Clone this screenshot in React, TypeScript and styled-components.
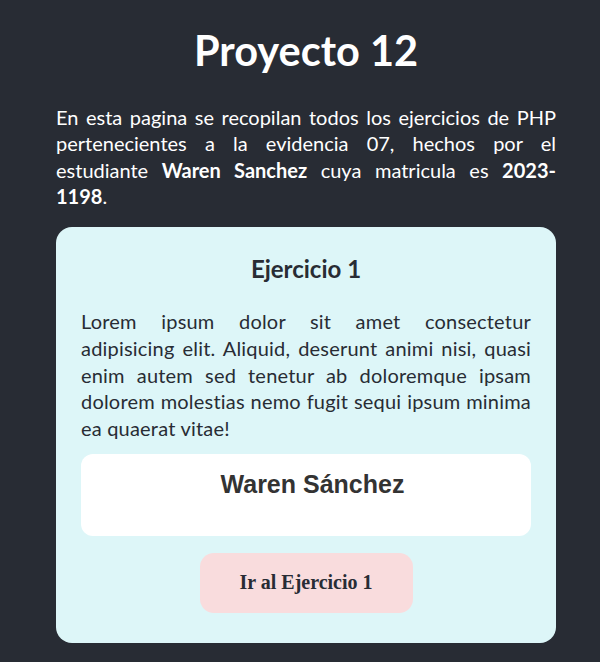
import React from "react";
import styled, { createGlobalStyle } from "styled-components";

const Global = createGlobalStyle`
  html, body { margin: 0; padding: 0; background: #282c34; }
  body { font-family: Lato, "Open Sans", sans-serif; }
`;

const Page = styled.main`
  width: 500px;
  margin-left: 56px;
  padding: 26px 0 19px;
  color: #ffffff;
`;

const Title = styled.h1`
  margin: 0;
  text-align: center;
  font-size: 41.5px;
  line-height: 48px;
  font-weight: bold;
`;

const Intro = styled.p`
  margin: 30px 0 0;
  font-size: 20px;
  line-height: 26.3px;
  text-align: justify;
`;

const Card = styled.section`
  margin-top: 18px;
  background: #ddf6f8;
  border-radius: 16px;
  padding: 28px 25px 30px;
  color: #282c34;
  display: flex;
  flex-direction: column;
`;

const CardTitle = styled.h3`
  margin: 0;
  text-align: center;
  font-size: 24px;
  line-height: 28px;
  font-weight: bold;
`;

const CardText = styled.p`
  margin: 25px 0 0;
  font-size: 20px;
  line-height: 26.7px;
  letter-spacing: 0.2px;
  text-align: justify;
`;

const NameBox = styled.div`
  margin-top: 12px;
  background: #ffffff;
  border-radius: 12px;
  height: 82px;
  padding: 16px 0 0 13px;
  box-sizing: border-box;
`;

const Name = styled.h2`
  margin: 0;
  text-align: center;
  font-family: "Liberation Sans", Arial, sans-serif;
  font-size: 25px;
  line-height: 29px;
  font-weight: bold;
  color: #333333;
`;

const Button = styled.button`
  align-self: center;
  margin-top: 17px;
  width: 213px;
  height: 60px;
  border: none;
  border-radius: 14px;
  background: #f9dcdd;
  color: #282c34;
  font-family: "Liberation Serif", "Times New Roman", serif;
  font-size: 20px;
  font-weight: bold;
  cursor: pointer;
`;

export default function App() {
  return (
    <>
      <Global />
      <Page>
        <Title>Proyecto 12</Title>
        <Intro>
          En esta pagina se recopilan todos los ejercicios de PHP pertenecientes a la evidencia 07, hechos por el
          estudiante <b>Waren Sanchez</b> cuya matricula es <b>2023-1198</b>.
        </Intro>
        <Card>
          <CardTitle>Ejercicio 1</CardTitle>
          <CardText>
            Lorem ipsum dolor sit amet consectetur adipisicing elit. Aliquid, deserunt animi nisi, quasi enim autem sed
            tenetur ab doloremque ipsam dolorem molestias nemo fugit sequi ipsum minima ea quaerat vitae!
          </CardText>
          <NameBox>
            <Name>Waren Sánchez</Name>
          </NameBox>
          <Button>Ir al Ejercicio 1</Button>
        </Card>
      </Page>
    </>
  );
}
